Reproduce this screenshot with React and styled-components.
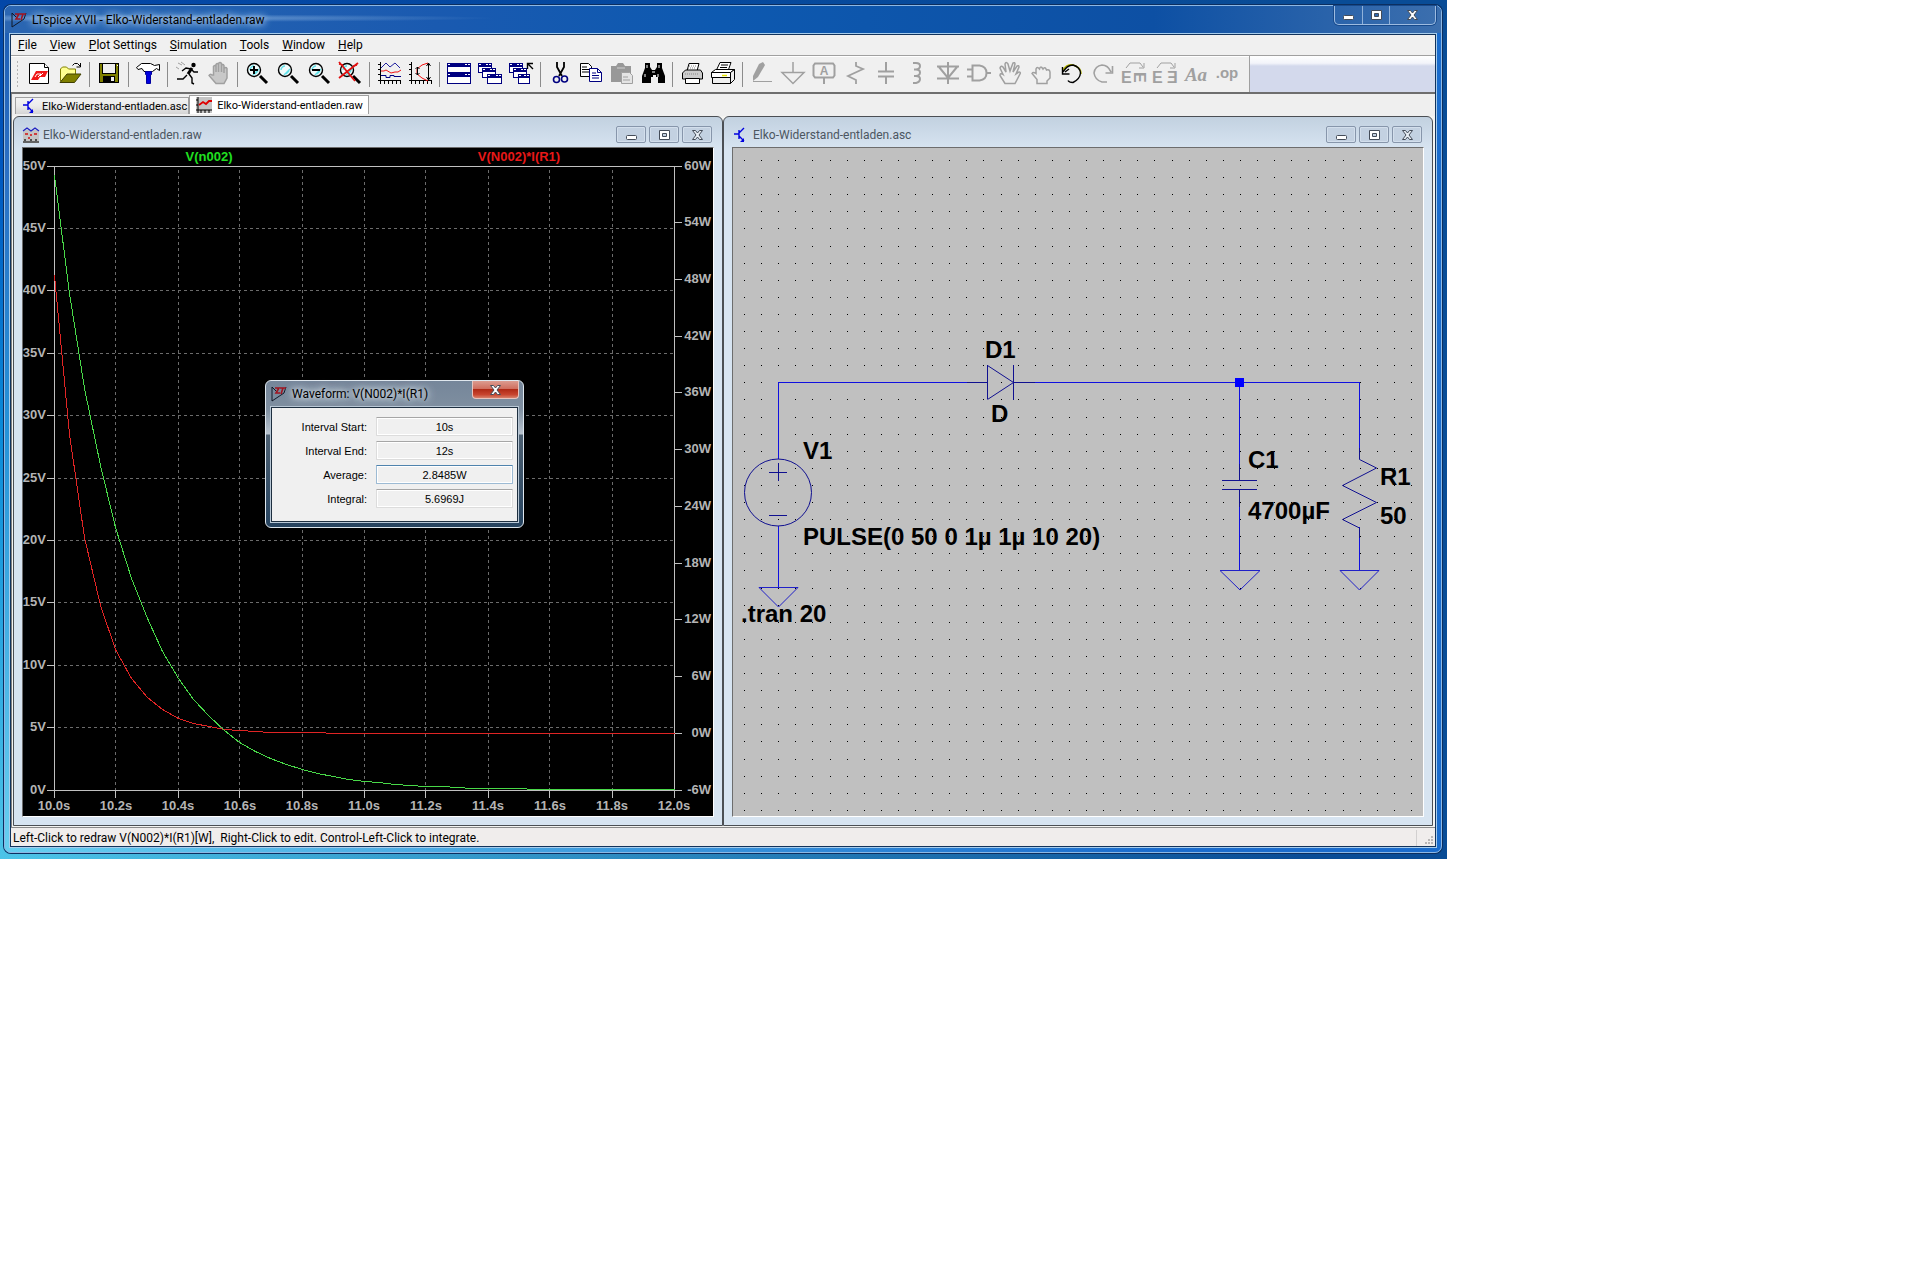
import React from 'react'
import styled, { createGlobalStyle } from 'styled-components'

const uiFont = 'Roboto, "Open Sans", sans-serif'
const gdiFont = '"Liberation Sans", Arial, sans-serif'

const GlobalStyle = createGlobalStyle`
  body {
    margin: 0;
    background: #ffffff;
    color: #000000;
    font-family: ${uiFont};
    font-size: 12px;
  }
  button, input {
    font: inherit;
    color: inherit;
    margin: 0;
    padding: 0;
    border: 0;
    background: none;
  }
  svg {
    display: block;
  }
`

const Desktop = styled.div`
  max-width: 1447px;
  box-sizing: border-box;
  padding: 5px 5px 6px 4px;
  background:
    linear-gradient(to right, rgba(9, 76, 150, 0) 0%, rgba(9, 76, 150, 1) 90%),
    linear-gradient(to bottom, #0347a8 0%, #0058c0 20%, #0a8ad8 50%, #4cc4e8 100%);
`

const AppWindow = styled.div`
  border: 1px solid #8db8e4;
  border-radius: 7px;
  padding: 0 4px 4px;
  box-shadow: 0 0 0 1px #0c2f60;
  background:
    linear-gradient(to right, rgba(26, 108, 205, 0) 0%, rgba(26, 108, 205, 1) 80%),
    linear-gradient(to bottom, #1c5cb2 0%, #2c70c4 20%, #2492d8 50%, #66cff0 100%);
`

const TitleBar = styled.header`
  display: flex;
  align-items: center;
  height: 27px;
  margin: 0 -4px;
  padding: 0 5px 0 6px;
  border-radius: 6px 6px 0 0;
  background:
    radial-gradient(ellipse at 10% 45%, rgba(165, 200, 236, 0.6) 0%, rgba(150, 190, 232, 0) 19%),
    linear-gradient(to right, #2b66b2 0%, #1a5ab0 30%, #0d59b0 50%, #0d50a4 80%, #3c6fae 100%);
`

const TitleText = styled.h1`
  flex: 1;
  margin: 0;
  padding-left: 5px;
  font-size: 12px;
  font-weight: 400;
  line-height: 18px;
  white-space: nowrap;
  text-shadow: 0 0 6px #a9c8ea, 0 0 8px #a9c8ea, 0 0 10px #a9c8ea;
`

const WindowButtons = styled.div`
  display: flex;
  align-self: flex-start;
  height: 18px;
  border: 1px solid #9dbbe0;
  border-top: 0;
  border-radius: 0 0 5px 5px;
  box-shadow: 0 0 0 1px #174a8c;
`

const WindowButton = styled.button`
  display: flex;
  align-items: center;
  justify-content: center;
  width: ${(p) => (p.$wide ? 46 : 27)}px;
  border-left: ${(p) => (p.$first ? '0' : '1px solid #8fb1da')};
`

const Client = styled.main`
  border: 1px solid #a8cdec;
  background: #efefef;
  outline: 1px solid #12335c;
  outline-offset: -2px;
  padding: 1px;
`

const MenuBar = styled.nav`
  display: flex;
  align-items: center;
  gap: 13px;
  height: 20px;
  padding-left: 7px;
  border-bottom: 1px solid #a0a0a0;
  background: #f0f0f0;
`

const MenuItem = styled.button`
  font-size: 12px;
  line-height: 16px;
  white-space: nowrap;
`

const ToolbarRow = styled.div`
  display: flex;
  height: 36px;
  border-bottom: 2px solid #6e6e6e;
  background: linear-gradient(to bottom, #ffffff 0%, #f2f4fa 20%, #d3d9ec 28%, #d3d9ec 100%);
`

const Toolbar = styled.div`
  display: flex;
  align-items: center;
  padding-right: 7px;
  border-right: 1px solid #a0a0a0;
  box-shadow: inset 0 1px #ffffff;
  background: #f0f0f0;
`

const Grip = styled.div`
  width: 3px;
  height: 28px;
  margin: 0 4px 0 5px;
  background: radial-gradient(circle, #b4b4b4 1px, transparent 1px) 0 0 / 3px 4px;
`

const ToolButton = styled.button`
  display: flex;
  justify-content: center;
  width: 31px;
  padding: 4px 0 6px;
`

const ToolSeparator = styled.span`
  width: 1px;
  height: 25px;
  margin: 0 3px 0 4px;
  background: #8c8c8c;
`

const Tabs = styled.div`
  display: flex;
  align-items: flex-end;
  height: 20px;
  padding: 0 0 2px 3px;
  border-left: 1px solid #808080;
`

const Tab = styled.button`
  display: flex;
  align-items: center;
  gap: ${(p) => (p.$active ? 5 : 4)}px;
  height: ${(p) => (p.$active ? 19 : 17)}px;
  padding: 0 ${(p) => (p.$active ? 5 : 1)}px 0 6px;
  border: 1px solid #a0a0a0;
  border-bottom: 0;
  background: ${(p) => (p.$active ? '#ffffff' : 'linear-gradient(to bottom, #f3f3f3 0%, #ebebeb 50%, #d4d4d4 100%)')};
  font-size: 11px;
  white-space: nowrap;
`

const Workspace = styled.section`
  position: relative;
  display: grid;
  grid-template-columns: 1fr 1fr;
  padding: 0 2px 1px;
  box-shadow: inset 1px 0 #808080;
  background: #f4f4f2;
`

const ChildWindow = styled.article`
  min-width: 0;
  border: 1px solid #4b4f54;
  border-radius: 6px 6px 0 0;
  padding: 0 8px 8px;
  background: linear-gradient(to bottom, #c2d1e0 0px, #d7e4f1 32px, #d7e4f1 100%);
`

const ChildTitle = styled.header`
  display: flex;
  align-items: center;
  box-sizing: border-box;
  height: 30px;
  padding: 5px 2px 0 1px;
`

const ChildTitleText = styled.h2`
  flex: 1;
  margin: 0;
  padding-left: 4px;
  font-size: 12px;
  font-weight: 400;
  line-height: 16px;
  color: #4c5661;
`

const ChildButtons = styled.div`
  display: flex;
  gap: 3px;
`

const ChildButton = styled.button`
  display: flex;
  align-items: center;
  justify-content: center;
  box-sizing: border-box;
  width: 30px;
  height: 17px;
  border: 1px solid #8796ab;
  border-radius: 2px;
  box-shadow: inset 0 0 0 1px #d3dfec;
  background: #c3d1e1;
`

const Pane = styled.div`
  border: 1px solid #ffffff;
  border-top-color: #6d6d6d;
  border-left-color: #6d6d6d;
  background: ${(p) => p.$fill};
`

const Drawing = styled.svg`
  width: 100%;
  height: auto;
`

const StatusBar = styled.footer`
  display: flex;
  align-items: flex-end;
  height: 18px;
  border-top: 1px solid #8a8a8a;
  padding-left: 2px;
  background: #f0edec;
`

const StatusText = styled.output`
  flex: 1;
  line-height: 16px;
  white-space: pre;
`

const SizeGrip = styled.div`
  display: flex;
  align-items: flex-end;
  justify-content: flex-end;
  width: 18px;
  height: 16px;
  border-left: 1px solid #d2d0d0;
`

const Dialog = styled.div`
  position: absolute;
  left: 254px;
  top: 264px;
  box-sizing: border-box;
  width: 259px;
  border: 1px solid #dfe7ee;
  border-radius: 6px;
  padding: 0 4px 4px;
  background: linear-gradient(to bottom, #75869a 0px, #7f8fa0 28px, #b9c4cf 53px, #4d6072 54px, #26435f 100%);
`

const DialogTitle = styled.header`
  display: flex;
  align-items: center;
  height: 25px;
  padding-left: 1px;
`

const DialogTitleText = styled.h2`
  flex: 1;
  margin: 0;
  padding: 1px 0 0 5px;
  font-size: 12px;
  font-weight: 400;
  line-height: 18px;
  text-shadow: 0 0 5px #d4dce4, 0 0 8px #d4dce4, 0 0 10px #d4dce4;
`

const DialogClose = styled.button`
  display: flex;
  align-items: center;
  justify-content: center;
  align-self: flex-start;
  width: 47px;
  height: 18px;
  border: 1px solid #e8c4bd;
  border-top: 0;
  border-radius: 0 0 4px 4px;
  background: linear-gradient(to bottom, #dc9c90 0%, #cf6c5c 48%, #b02a16 50%, #c8452f 80%, #d8806a 100%);
`

const DialogBody = styled.form`
  display: grid;
  gap: 5px;
  border: 1px solid #b9c8d6;
  outline: 1px solid #1e2f40;
  outline-offset: -2px;
  padding: 10px 5px 14px;
  background: #f0f0f0;
  font-family: ${gdiFont};
  font-size: 11px;
`

const Field = styled.label`
  display: grid;
  grid-template-columns: 1fr 137px;
  gap: 9px;
  align-items: center;
  text-align: right;
`

const FieldValue = styled.input`
  box-sizing: border-box;
  width: 100%;
  height: 19px;
  border: 1px solid ${(p) => (p.$focused ? '#9dbbd4' : '#dcdcdc')};
  border-top-color: ${(p) => (p.$focused ? '#4f83ad' : '#a6a6a6')};
  border-radius: 1px;
  box-shadow: inset 0 0 0 1px #ffffff;
  background: #f0f0f0;
  text-align: center;
`

const GREY = '#a0a0a0'
const NAVY = '#000080'

const IconSvg = styled.svg`
  flex: none;
  overflow: visible;
`

const Icon = ({ children, size = 24 }) => (
  <IconSvg width={size} height={size} viewBox={`0 0 ${size} ${size}`} fill="none" stroke="#000" aria-hidden="true">
    {children}
  </IconSvg>
)

const AppLogo = () => (
  <Icon size={16}>
    <path d="M1 1v14l12-8 2-6M1 1l5 5" stroke="#101828" />
    <path d="M4 2h4l-3 5h4M9 2h6M12 2l-2 6" stroke="#a01420" strokeWidth="1.6" />
  </Icon>
)

const TransistorIcon = () => (
  <Icon size={16}>
    <g stroke="#0000e0" strokeWidth="1.4">
      <path d="M1 7h5M6 3v9M6 6l5-5M6 9l5 5" />
      <path d="M11 11v4H7z" fill="#0000e0" stroke="none" />
    </g>
  </Icon>
)

const RawIcon = () => (
  <Icon size={16}>
    <rect width="16" height="16" fill="#c4c4c4" stroke="none" />
    <path d="M2 0v16M0 13h16M0 3h2M0 8h2M5 13v3M9 13v3M13 13v3" />
    <path d="M3 8l4-3 3 2 3-3h3" stroke="#e00000" strokeWidth="1.8" />
  </Icon>
)

const PlotIcon = () => (
  <Icon size={16}>
    <rect y="3" width="16" height="13" fill="#c4c4c4" stroke="none" />
    <path d="M0 4l4-3 4 3 4-3 4 3" stroke="#2020c0" strokeWidth="1.2" />
    <path d="M2 7h3M7 8h2M11 7h3M5 11h2" stroke="#d01010" strokeWidth="1.4" />
    <path d="M0 15h16M2 12v2M8 12v2M13 12v2" strokeWidth="1.2" />
  </Icon>
)

const Glass = ({ children }) => (
  <>
    <circle cx="9" cy="9" r="6.5" fill="#f0fafa" strokeWidth="1.4" />
    <path d="M5 9c0-2 2-4 4-4M10 13l3-3M8 14l6-6" stroke="#60e0e8" strokeWidth="1.4" />
    <path d="M15 15l7 7" strokeWidth="3" />
    {children}
  </>
)

const MiniWindow = ({ x, y, w = 14, h = 10 }) => (
  <g shapeRendering="crispEdges">
    <rect x={x} y={y} width={w} height={h} fill="#fff" stroke="none" />
    <path d={`M${x} ${y}h${w}v${h}h${-w}zM${x + 1} ${y + 4}v${h - 5}h${w - 2}v${5 - h}z`} fill={NAVY} fillRule="evenodd" stroke="none" />
    <path d={`M${x + 1} ${y + 1}h2v1h-2zM${x + w - 6} ${y + 1}h2v1h-2zM${x + w - 3} ${y + 1}h2v1h-2z`} fill="#fff" stroke="none" />
  </g>
)

const Axes = () => (
  <path d="M3.5 1v22M1 19.5h23M1 3.5h2M1 8.5h2M1 13.5h2M7.5 20v3M11.5 20v3M15.5 20v3M19.5 20v3M23.5 20v3" shapeRendering="crispEdges" />
)

const tools = [
  ['New', <>
    <path d="M2.5 2.5h15l4 4v16h-19z" fill="#fff" />
    <path d="M17.5 2.5v4h4" fill="#fff" />
    <path d="M4 19l5-9h12l-3 6h-5l-2 3z" fill="#f01818" stroke="none" />
    <path d="M8 16l2-3h4l-3 3M16 12l-3 3" stroke="#fff" />
  </>],
  ['Open', <>
    <path d="M2.5 20V8l2-2h4l2 2h7v5" fill="#ffff90" stroke="#808000" />
    <path d="M2 21.5l7-8.5h14l-6.500 8.500z" fill="#808000" stroke="#404000" />
    <path d="M14.5 4.500l2-2h3l3 3M22.500 2v4h-4" />
  </>],
  null,
  ['Save', <g shapeRendering="crispEdges">
    <rect x="2.5" y="2.5" width="19" height="19" fill="#808000" />
    <rect x="5.5" y="2.5" width="13" height="10" fill="#efefef" />
    <rect x="6" y="15" width="12" height="6" fill="#000" stroke="none" />
    <rect x="14" y="16" width="3" height="4" fill="#efefef" stroke="none" />
    <path d="M20 4h1v1h-1z" fill="#fff" stroke="none" />
  </g>],
  null,
  ['Control Panel', <>
    <path d="M0.5 6.500l5-4h9l4 2 5-1v6l-3-2-4 3H8l-2-3-4 1z" fill="#fff" />
    <path d="M9.5 10.500h6v3h-1v9h-4v-9h-1z" fill="#0000e0" stroke="#0000a0" />
  </>],
  null,
  ['Run', <>
    <circle cx="18.5" cy="4" r="2.2" fill="#000" stroke="none" />
    <path d="M17 7l-4 6" strokeWidth="3" />
    <path d="M16 8l-5-1-4 3M17 9l2 2h4M14 13l3 4v5l2 1M12 14l-4 4H2" strokeWidth="1.4" />
    <path d="M3 2l4 2M6 1l4 3M1 6l3 2" stroke={GREY} />
  </>],
  ['Halt', <path d="M7.5 14V5.500q1.500-2 2.500 0V11 3.500q1.500-2 2.500 0V11 2.500q1.500-2 3 0V11 4.500q1.500-2 2.500 0V12 7.500q2-2 3 0V17l-3 5.500h-8L3 14.500q1-2 3-.5z" fill="#c8c8c8" stroke={GREY} strokeWidth="1.5" />],
  null,
  ['Zoom in', <Glass><path d="M9 5v8M5 9h8" strokeWidth="2" /></Glass>],
  ['Pan', <Glass />],
  ['Zoom out', <Glass><path d="M5 9h8" strokeWidth="2" /></Glass>],
  ['Zoom full extents', <Glass><path d="M1 1l16 19M20 2L1 17M1 3l4 1M15 5l4-1" stroke="#e01010" strokeWidth="1.8" /></Glass>],
  null,
  ['Autorange', <>
    <Axes />
    <path d="M4 7l5-5 4 4 5-4 5 5" stroke="#2020a0" />
    <path d="M4 10h3l2-1 5 3 4-1h3l3-2" stroke="#f01010" />
    <path d="M4 14.5h5v2h4v-2h4v1h7" stroke={NAVY} />
  </>],
  ['Pick visible traces', <>
    <Axes />
    <path d="M20 2l-6 2-5 4v5l5 4 6 3" stroke="#f01010" />
    <path d="M20.5 2v17M18.500 5l2-3 2 3M18.500 16l2 3 2-3M9.500 6v8M7.500 8l2-2 2 2M7.500 12l2 2 2-2" />
  </>],
  null,
  ['Tile windows', <><MiniWindow x={0} y={2} w={24} h={10} /><MiniWindow x={0} y={12} w={24} h={11} /></>],
  ['Cascade windows', <><MiniWindow x={0} y={2} /><MiniWindow x={4} y={7} /><MiniWindow x={9} y={13} w={15} /></>],
  ['Close all windows', <>
    <MiniWindow x={0} y={2} /><MiniWindow x={4} y={7} /><MiniWindow x={9} y={13} w={12} />
    <path d="M18.5 8V2.500H24M19 3l5 5" strokeWidth="1.4" />
  </>],
  null,
  ['Cut', <>
    <path d="M9 1v5l5 9M16 1v5l-5 9" strokeWidth="1.8" />
    <circle cx="8.5" cy="18.5" r="3" stroke={NAVY} strokeWidth="1.6" />
    <circle cx="16.5" cy="18" r="3" stroke={NAVY} strokeWidth="1.6" />
  </>],
  ['Copy', <>
    <path d="M1.5 2.500h8l3 3v10h-11z" fill="#fff" />
    <path d="M3 6h5M3 8.500h7M3 11h7" />
    <path d="M10.5 7.500h8l4 4v9h-12z" fill="#fff" stroke={NAVY} />
    <path d="M18.5 7.500v4h4M13 12h4M13 14.500h7M13 17h7" stroke={NAVY} />
  </>],
  ['Paste', <>
    <path d="M1 5h5l2-3h5l2 3h6v16H1z" fill="#989898" stroke="none" />
    <path d="M7 7h8" stroke="#d0d0d0" />
    <path d="M11.5 11.500h8l3 3v8h-11z" fill="#e4e4e4" stroke={GREY} />
    <path d="M13 16h5M13 19h7" stroke={GREY} />
  </>],
  ['Find', <>
    <path d="M4 2h5v4l2 3h3l2-3V2h5v5l3 8v7h-7v-6h-2v-2h-3v2h-2v6H1v-7l3-8z" fill="#000" stroke="none" />
    <path d="M6 4v3M18 4v3M4 13v3M17 13v3M11 11h3" stroke="#fff" />
  </>],
  null,
  ['Print', <>
    <path d="M7 10l2-7.500h10L17 10" fill="#fff" />
    <path d="M2.5 12l3-3h15l2 3v6h-20z" fill="#ccc" />
    <path d="M5.5 17.500h14v5h-14z" fill="#fff" />
    <path d="M5 13h14M9 5h8M8 7h8" stroke="#888" strokeDasharray="1 1" />
  </>],
  ['Print setup', <>
    <path d="M5 10l4-8.500h11l-3 8.500" fill="#fff" />
    <path d="M10 4h7M9 6.500h7" />
    <path d="M0.5 11.500l4-3h19l-4 3zM0.500 11.500h19v5h-19z" fill="#fff" />
    <path d="M19.5 11.500l4-3v10l-4 4zM1.500 16.500h18v6h-18z" fill="#f0f0f0" />
    <path d="M11 14.5h5" stroke="#e0e000" strokeWidth="1.5" />
  </>],
  null,
  ['Wire', <>
    <path d="M3 20V15L9 3l4-2 2 3-7 12z" fill={GREY} stroke="none" />
    <path d="M3 20.5h19" stroke={GREY} />
  </>],
  ['Ground', <path d="M12 1v11M1 11.500h22l-11 11z" stroke={GREY} strokeWidth="1.5" />],
  ['Label net', <>
    <path d="M3 2.500h18l1.500 2v10l-1.500 2H3l-1.500-2v-10zM12 17v6" stroke={GREY} strokeWidth="2" />
    <text x="12" y="14" textAnchor="middle" fontFamily={gdiFont} fontWeight="700" fontSize="12" fill={GREY} stroke="none">A</text>
  </>],
  ['Resistor', <path d="M13 1v4l7 3-15 7 8 4v4" stroke={GREY} strokeWidth="1.8" />],
  ['Capacitor', <path d="M12 1v9M4 10.500h16M4 15.500h16M12 16v7" stroke={GREY} strokeWidth="2" />],
  ['Inductor', <path d="M8 2h3q4 0 4 3t-4 3.500H9M11 8.500q4 0 4 3t-4 3.500H9M11 15q4 0 4 3t-4 4H8" stroke={GREY} strokeWidth="2" />],
  ['Diode', <path d="M12 1v22M1 5.500h22M3 6l9 11 9-11M1 17.500h22" stroke={GREY} strokeWidth="2" />],
  ['Component', <path d="M0 8.500h5M0 15.500h5M5.500 4.500h7q7 1 7 7.500t-7 7.500h-7zM20 12h4" stroke={GREY} strokeWidth="2" />],
  ['Move', <path d="M7 22.500l-5-8q0-3 3-1L2 7q1-3 3-1l3 5L7 3q1-3 3 0l2 7 3-8q2-1 2 1l-2 8 4-6q2-1 2 1l-3 7 3-2q2 0 1 2l-5 9.500z" stroke={GREY} strokeWidth="1.5" />],
  ['Drag', <path d="M8 22.500v-4l-5-6q1-2 4 0V8q1-3 3.500 0 1-4 3.500 0 2-3 3.500 1 3-1 3.500 2v6l-3 3v2.500z" stroke={GREY} strokeWidth="1.5" />],
  ['Undo', <>
    <path d="M3 9q4-6 10-5 8 2 8 9" stroke="#b8b800" strokeWidth="1.5" />
    <path d="M3 11q4-7 10-7 7 2 7.500 8-.5 6-7.500 9.500-4 0-5-2M2.500 6v7h7M5 11l4-3" strokeWidth="1.4" />
  </>],
  ['Redo', <path d="M20 11q-3-7-9-7-7 1-8 8 1 7 8 9h5M21.500 5v7h-7" stroke={GREY} strokeWidth="1.6" />],
  ['Rotate', <>
    <path d="M4 7l4-5h10l3 4M22 2v5h-5" stroke={GREY} />
    <g fill={GREY} stroke="none" fontFamily={gdiFont} fontWeight="700" fontSize="16">
      <text x="-1" y="22">E</text>
      <text transform="translate(12 11) rotate(90)">E</text>
    </g>
  </>],
  ['Mirror', <>
    <path d="M4 7l4-5h10l3 4M22 2v5h-5" stroke={GREY} />
    <g fill={GREY} stroke="none" fontFamily={gdiFont} fontWeight="700" fontSize="16">
      <text x="-1" y="22">E</text>
      <text x="14" y="22">Ǝ</text>
    </g>
  </>],
  ['Text', <text x="12" y="20" textAnchor="middle" fontFamily="Liberation Serif, serif" fontStyle="italic" fontWeight="700" fontSize="19" fill={GREY} stroke="none">Aa</text>],
  ['SPICE directive', <text x="12" y="17" textAnchor="middle" fontFamily={gdiFont} fontWeight="700" fontSize="15" fill={GREY} stroke="none">.op</text>],
]

const menus = ['File', 'View', 'Plot Settings', 'Simulation', 'Tools', 'Window', 'Help']

const measurements = [
  { label: 'Interval Start:', value: '10s' },
  { label: 'Interval End:', value: '12s' },
  { label: 'Average:', value: '2.8485W', focused: true },
  { label: 'Integral:', value: '5.6969J' },
]

const Cross = ({ fill = '#ffffff', stroke = '#444c58' }) => (
  <svg width="13" height="12" viewBox="0 0 13 12" aria-hidden="true">
    <path d="M1.5 1.500h3l2 2.500 2-2.500h3l-3.500 4.500 3.500 4.500h-3l-2-2.500-2 2.500h-3L5 6z" fill={fill} stroke={stroke} />
  </svg>
)

const Minimize = () => (
  <svg width="13" height="12" viewBox="0 0 13 12" aria-hidden="true">
    <rect x="1.5" y="6.5" width="10" height="4" rx="1" fill="#fff" stroke="#444c58" />
  </svg>
)

const Maximize = () => (
  <svg width="13" height="12" viewBox="0 0 13 12" aria-hidden="true">
    <path d="M1.5 1.500h10v9h-10zM4.500 4.500v3h4v-3z" fill="#fff" fillRule="evenodd" stroke="#444c58" />
  </svg>
)

// Plot area in drawing units: 10 s..12 s across, 0 V..50 V and -6 W..60 W up
const LEFT = 31
const RIGHT = 651
const TOP = 18
const BOTTOM = 642
const TAU = 0.235

const timeX = (t) => LEFT + ((t - 10) / 2) * (RIGHT - LEFT)
const voltY = (v) => BOTTOM - (v / 50) * (BOTTOM - TOP)
const wattY = (w) => BOTTOM - ((w + 6) / 66) * (BOTTOM - TOP)
const snap = (n) => Math.floor(n) + 0.5

const trace = (toY) =>
  Array.from({ length: 41 }, (_, i) => {
    const t = 10 + i * 0.05
    const v = 49.2 * Math.exp(-(t - 10) / TAU)
    return `${snap(timeX(t))},${snap(toY(v))}`
  }).join(' ')

const Waveform = () => {
  const times = Array.from({ length: 11 }, (_, i) => 10 + i * 0.2)
  const volts = Array.from({ length: 11 }, (_, i) => i * 5)
  const watts = Array.from({ length: 12 }, (_, i) => i * 6 - 6)
  return (
    <Drawing viewBox="0 0 690 668" fontFamily={gdiFont} fontSize="13" fontWeight="700" role="img" aria-label="Waveform plot">
      <g stroke="#6c6c6c" strokeDasharray="3 3" shapeRendering="crispEdges">
        {times.slice(1, -1).map((t) => (
          <path key={t} d={`M${snap(timeX(t))} ${TOP + 4}V${BOTTOM}`} />
        ))}
        {volts.slice(1, -1).map((v) => (
          <path key={v} d={`M${LEFT + 4} ${snap(voltY(v))}H${RIGHT}`} />
        ))}
      </g>
      <g stroke="#c0c0c0" fill="none" shapeRendering="crispEdges">
        <rect x={LEFT + 0.5} y={TOP + 0.5} width={RIGHT - LEFT} height={BOTTOM - TOP} />
        {times.map((t) => <path key={t} d={`M${snap(timeX(t))} ${BOTTOM}v8`} />)}
        {volts.map((v) => <path key={v} d={`M${LEFT - 7} ${snap(voltY(v))}h7`} />)}
        {watts.map((w) => <path key={w} d={`M${RIGHT} ${snap(wattY(w))}h8`} />)}
      </g>
      <g fill="none" shapeRendering="crispEdges">
        <polyline points={trace((v) => wattY((v * v) / 50))} stroke="#e02424" />
        <polyline points={trace(voltY)} stroke="#48d848" />
      </g>
      <g fill="#b4b4b4">
        {times.map((t) => <text key={t} x={timeX(t)} y="662" textAnchor="middle">{t.toFixed(1)}s</text>)}
        {volts.map((v) => <text key={v} x={LEFT - 8} y={Math.floor(voltY(v)) + 4} textAnchor="end">{v}V</text>)}
        {watts.map((w) => <text key={w} x="688" y={Math.floor(wattY(w)) + 4} textAnchor="end">{w}W</text>)}
      </g>
      <g textAnchor="middle">
        <text x="186" y="13" fill="#20e020">V(n002)</text>
        <text x="496" y="13" fill="#e81818">V(N002)*I(R1)</text>
      </g>
    </Drawing>
  )
}

const gridDots = Array.from({ length: 39 }, (_, row) =>
  Array.from({ length: 40 }, (_, col) => `M${Math.round(11 + col * 17.1)} ${Math.round(12 + row * 17.1)}h1v1h-1z`).join('')
).join('')

const Schematic = () => (
  <Drawing viewBox="0 0 690 668" fill="none" role="img" aria-label="Schematic">
    <path d={gridDots} fill="#000" shapeRendering="crispEdges" />
    <g stroke="#1010e0" shapeRendering="crispEdges">
      <path d="M254 234.500H45.500V311M45.500 378v61" />
      <path d="M280 234.500h346.500V311M506.500 234v82M506.500 358v64M626.500 379v43" />
      <rect x="502" y="230" width="9" height="9" fill="#0000ff" stroke="none" />
    </g>
    <g stroke="#2020c8">
      <path d="M26 439.500h39l-19.500 19.500z" />
      <path d="M487 422.500h40l-20 19.500z" />
      <path d="M607 422.500h39l-19.500 19.500z" />
    </g>
    <g stroke="#101090">
      <circle cx="45" cy="344.5" r="33.5" />
      <path d="M36 324.500h18M45.500 315v18M36 367.500h18" />
      <path d="M254.500 217v34M254.500 217.500l26 17-26 17M280.500 217v35M234 234.500h20M280 234.500h22" />
      <path d="M489 332.500h35M489 341.500h35M506.500 316v16M506.500 342v17" />
      <path d="M626.500 300v11.500l17 8.500-34 17.500 34 17-34 17 17 8.500v10" />
    </g>
    <g fill="#000" fontFamily={gdiFont} fontSize="24" fontWeight="700">
      <text x="252" y="210">D1</text>
      <text x="258" y="274">D</text>
      <text x="70" y="311">V1</text>
      <text x="70" y="397">PULSE(0 50 0 1µ 1µ 10 20)</text>
      <text x="8" y="474">.tran 20</text>
      <text x="515" y="320">C1</text>
      <text x="515" y="371">4700µF</text>
      <text x="647" y="337">R1</text>
      <text x="647" y="376">50</text>
    </g>
  </Drawing>
)

const Child = ({ icon, title, fill, children }) => (
  <ChildWindow>
    <ChildTitle>
      {icon}
      <ChildTitleText>{title}</ChildTitleText>
      <ChildButtons>
        <ChildButton aria-label="Minimize"><Minimize /></ChildButton>
        <ChildButton aria-label="Maximize"><Maximize /></ChildButton>
        <ChildButton aria-label="Close"><Cross fill="#e8eef5" /></ChildButton>
      </ChildButtons>
    </ChildTitle>
    <Pane $fill={fill}>{children}</Pane>
  </ChildWindow>
)

const App = () => (
  <>
    <GlobalStyle />
    <Desktop>
      <AppWindow>
        <TitleBar>
          <AppLogo />
          <TitleText>LTspice XVII - Elko-Widerstand-entladen.raw</TitleText>
          <WindowButtons>
            <WindowButton $first aria-label="Minimize"><Minimize /></WindowButton>
            <WindowButton aria-label="Maximize"><Maximize /></WindowButton>
            <WindowButton $wide aria-label="Close"><Cross /></WindowButton>
          </WindowButtons>
        </TitleBar>
        <Client>
          <MenuBar>
            {menus.map((name) => (
              <MenuItem key={name}><u>{name[0]}</u>{name.slice(1)}</MenuItem>
            ))}
          </MenuBar>
          <ToolbarRow>
            <Toolbar role="toolbar">
              <Grip />
              {tools.map((tool, i) => tool
                ? <ToolButton key={i} aria-label={tool[0]}><Icon>{tool[1]}</Icon></ToolButton>
                : <ToolSeparator key={i} />)}
            </Toolbar>
          </ToolbarRow>
          <Tabs role="tablist">
            <Tab role="tab" aria-selected="false"><TransistorIcon />Elko-Widerstand-entladen.asc</Tab>
            <Tab role="tab" aria-selected="true" $active><RawIcon />Elko-Widerstand-entladen.raw</Tab>
          </Tabs>
          <Workspace>
            <Child icon={<PlotIcon />} title="Elko-Widerstand-entladen.raw" fill="#000000">
              <Waveform />
            </Child>
            <Child icon={<TransistorIcon />} title="Elko-Widerstand-entladen.asc" fill="#c0c0c0">
              <Schematic />
            </Child>
            <Dialog role="dialog" aria-label="Waveform integral">
              <DialogTitle>
                <AppLogo />
                <DialogTitleText>Waveform: V(N002)*I(R1)</DialogTitleText>
                <DialogClose aria-label="Close"><Cross /></DialogClose>
              </DialogTitle>
              <DialogBody>
                {measurements.map(({ label, value, focused }) => (
                  <Field key={label}>
                    {label}
                    <FieldValue readOnly value={value} $focused={focused} />
                  </Field>
                ))}
              </DialogBody>
            </Dialog>
          </Workspace>
          <StatusBar>
            <StatusText>{'Left-Click to redraw V(N002)*I(R1)[W],  Right-Click to edit. Control-Left-Click to integrate.'}</StatusText>
            <SizeGrip>
              <svg width="10" height="10" viewBox="0 0 10 10" aria-hidden="true">
                <path d="M6 0h2v2H6zM3 3h2v2H3zM6 3h2v2H6zM0 6h2v2H0zM3 6h2v2H3zM6 6h2v2H6z" fill="#b8b6b6" />
              </svg>
            </SizeGrip>
          </StatusBar>
        </Client>
      </AppWindow>
    </Desktop>
  </>
)

export default App
